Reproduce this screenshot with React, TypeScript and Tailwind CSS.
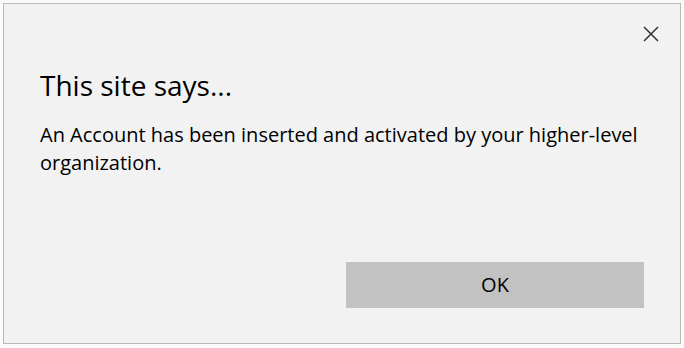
export default function App() {
    return (
        <div className="w-[684px] h-[348px] bg-[#fbfbfb] pt-[3px] pl-[3px] overflow-hidden">
            <div
                className="w-[678px] h-[341px] bg-[#f2f2f2] border border-[#b9b9b9] flex flex-col text-black"
                style={{ fontFamily: '"Open Sans", "Noto Sans", sans-serif' }}
            >
                <div className="flex justify-end pt-[22px] pr-[21px]">
                    <svg width="16" height="16" viewBox="0 0 16 16" className="text-[#333]">
                        <path d="M1 1L15 15M15 1L1 15" stroke="currentColor" strokeWidth="1.5" />
                    </svg>
                </div>
                <h1 className="pl-[36px] mt-[25px] text-[28px] leading-[36px] font-normal">
                    This site says...
                </h1>
                <p className="pl-[36px] pr-[30px] mt-[18px] text-[20px] leading-[28px]">
                    An Account has been inserted and activated by your higher-level organization.
                </p>
                <div className="mt-auto mb-[35px] flex justify-end pr-[36px]">
                    <button className="w-[298px] h-[46px] bg-[#c2c2c2] text-[20px]">OK</button>
                </div>
            </div>
        </div>
    );
}
